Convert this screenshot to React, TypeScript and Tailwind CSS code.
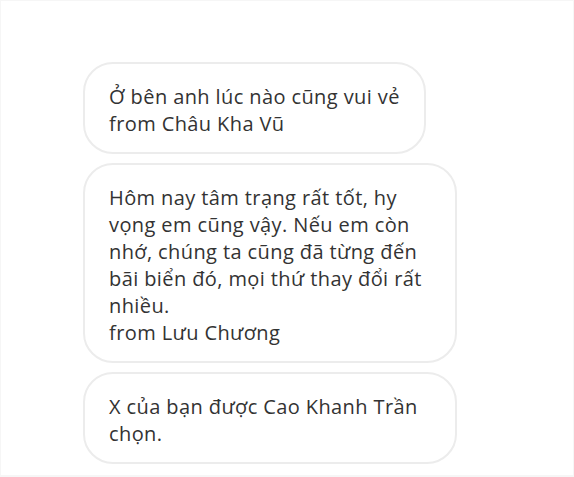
import React from 'react';

const messages: { lines: string[]; wide: boolean }[] = [
  { lines: ['Ở bên anh lúc nào cũng vui vẻ', 'from Châu Kha Vũ'], wide: false },
  {
    lines: [
      'Hôm nay tâm trạng rất tốt, hy',
      'vọng em cũng vậy. Nếu em còn',
      'nhớ, chúng ta cũng đã từng đến',
      'bãi biển đó, mọi thứ thay đổi rất',
      'nhiều.',
      'from Lưu Chương',
    ],
    wide: true,
  },
  { lines: ['X của bạn được Cao Khanh Trần', 'chọn.'], wide: true },
];

const App: React.FC = () => {
  return (
    <div className="w-[574px] h-[477px] bg-[#f6f6f6] pt-px pl-px">
      <div className="w-[572px] h-[474px] bg-white pt-[61px] pl-[82px]">
        <div className="flex flex-col items-start gap-[9px]">
          {messages.map((m, i) => (
            <div
              key={i}
              className={`${m.wide ? 'w-[374px]' : ''} rounded-[30px] border-2 border-[#ececec] bg-white px-[24px] pt-[19px] pb-[15px] text-[20px] leading-[27px] tracking-[0.4px] text-[#333333] whitespace-nowrap`}
              style={{ fontFamily: '"Open Sans", "Noto Sans", sans-serif' }}
            >
              {m.lines.map((l, j) => (
                <div key={j}>{l}</div>
              ))}
            </div>
          ))}
        </div>
      </div>
    </div>
  );
};

export default App;
